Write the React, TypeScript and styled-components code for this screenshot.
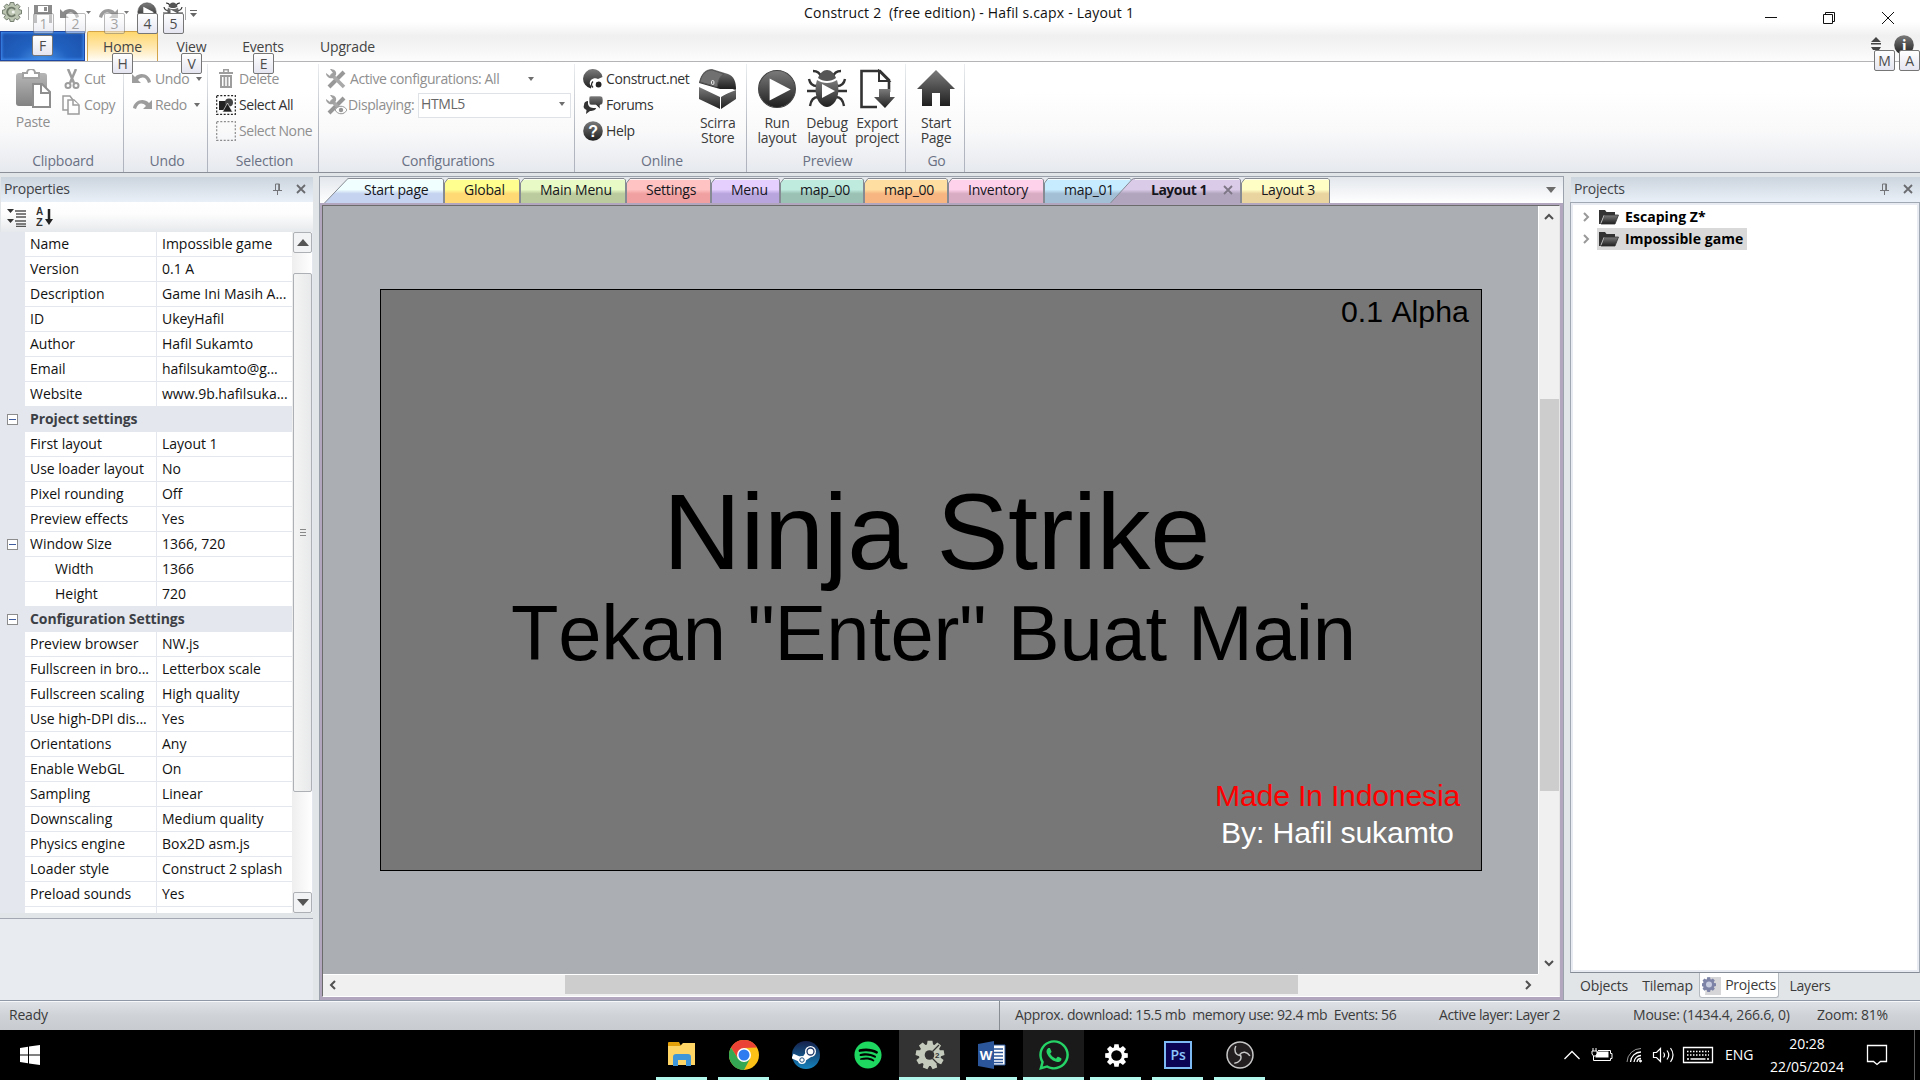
import React from "react";
import styled, { createGlobalStyle, css } from "styled-components";
import { FaWhatsapp, FaSpotify } from "react-icons/fa";

const ui = `"Open Sans", "Noto Sans", sans-serif`;

const Global = createGlobalStyle`
  * { box-sizing: border-box; }
  body { margin: 0; background: #e1e5e8; overflow: hidden; }
`;

const Window = styled.div`
  position: relative;
  width: 1920px;
  height: 1080px;
  display: flex;
  flex-direction: column;
  font: 14px/20px ${ui};
  letter-spacing: -0.2px;
  color: #3b3b3b;
  white-space: pre;
  overflow: hidden;
  background: #e1e5e8;
`;

/* ---------- Title bar and ribbon ---------- */

const Header = styled.header`
  height: 62px;
  display: flex;
  flex-direction: column;
  background: linear-gradient(#fff 0, #fff 22px, #f0f0f0 36px, #f2f2f2 42px, #fcfcfc 60px);
  border-bottom: 1px solid #b4b4b6;
`;

const TitleRow = styled.div`
  height: 31px;
  display: grid;
  grid-template-columns: 804px 1fr 190px;
`;

const QuickAccess = styled.div`
  display: flex;
  padding-top: 2px;
  padding-left: 2px;
  align-items: flex-start;
  & > svg { flex: none; }
`;

const Drop = styled.span`
  padding-top: 5px;
  height: 20px;
  line-height: 0;
`;

const Title = styled.div`
  padding-top: 3px;
  color: #111;
  letter-spacing: 0.2px;
`;

const WindowButtons = styled.div`
  display: flex;
  padding: 11px 0 0 34px;
  gap: 45px;
  height: 30px;
`;

const TabRow = styled.nav`
  height: 31px;
  display: flex;
  align-items: stretch;
`;

const FileButton = styled.div`
  width: 85px;
  margin-right: 2px;
  border: 1px solid #1d47a3;
  box-shadow: inset 0 0 3px 1px #3f8cf0;
  background: radial-gradient(ellipse at 50% 110%, #4a97ea 0, #2161c0 45%, #1c50ab 100%);
`;

const RibbonTab = styled.div<{ $w: number; $active?: boolean }>`
  width: ${(p) => p.$w}px;
  display: flex;
  justify-content: center;
  padding-top: 6px;
  color: #444;
  ${(p) =>
    p.$active &&
    css`
      border: 1px solid #d3a448;
      border-bottom: 0;
      border-radius: 2px 2px 0 0;
      padding-top: 5px;
      background: linear-gradient(#ffd76d, #ffe9b3 55%, #fffdf8);
    `}
`;

const HeaderTools = styled.div`
  margin-left: auto;
  display: flex;
  gap: 12px;
  padding: 4px 6px 0 0;
`;

const Ribbon = styled.section`
  height: 111px;
  display: flex;
  background: linear-gradient(#fff 0, #fff 30px, #f9f9fa 70px, #e6e9ee 110px);
  border-bottom: 1px solid #8a8f98;
`;

const Group = styled.div<{ $w: number }>`
  width: ${(p) => p.$w}px;
  display: flex;
  flex-direction: column;
  margin-top: 2px;
  border-right: 1px solid;
  border-image: linear-gradient(#eceef0, #b3b8c1 60%, #aeb3bd) 1;
`;

const GroupBody = styled.div<{ $pad: number; $gap?: number }>`
  height: 86px;
  display: flex;
  gap: ${(p) => p.$gap ?? 0}px;
  padding-left: ${(p) => p.$pad}px;
`;

const GroupName = styled.div`
  padding: 1px 0 0 3px;
  text-align: center;
  color: #6a7184;
`;

const Column = styled.div`
  display: flex;
  flex-direction: column;
  padding-top: 2px;
`;

const Command = styled.div<{ $off?: boolean; $gap?: number }>`
  height: 26px;
  display: flex;
  align-items: center;
  gap: ${(p) => p.$gap ?? 3}px;
  letter-spacing: -0.4px;
  color: ${(p) => (p.$off ? "#8f8f8f" : "#333")};
  & > svg { flex: none; opacity: ${(p) => (p.$off ? 0.5 : 1)}; }
`;

const ComboLabel = styled.span`
  width: 69px;
`;

const BigCommand = styled.div<{ $w: number; $off?: boolean }>`
  width: ${(p) => p.$w}px;
  display: flex;
  flex-direction: column;
  align-items: center;
  padding-top: 5px;
  gap: 6px;
  text-align: center;
  line-height: 15px;
  letter-spacing: -0.25px;
  color: ${(p) => (p.$off ? "#8f8f8f" : "#3b3b3b")};
  & > svg { flex: none; opacity: ${(p) => (p.$off ? 0.55 : 1)}; }
`;

const Combo = styled.div`
  width: 153px;
  height: 25px;
  border: 1px solid #dfe3e8;
  background: #fff;
  display: flex;
  align-items: center;
  justify-content: space-between;
  padding: 0 5px 2px 2px;
  color: #666;
`;

const Arrow = styled.i<{ $c?: string; $s?: number }>`
  flex: none;
  width: 0;
  height: 0;
  border: ${(p) => p.$s ?? 3}px solid transparent;
  border-bottom: 0;
  border-top: ${(p) => (p.$s ?? 3) + 1}px solid ${(p) => p.$c ?? "#6e6e6e"};
`;

const KeyTip = styled.kbd<{ $x: number; $y: number; $off?: boolean }>`
  position: absolute;
  left: ${(p) => p.$x}px;
  top: ${(p) => p.$y}px;
  width: 21px;
  height: 21px;
  border: 1px solid #767676;
  border-radius: 2px;
  background: linear-gradient(#fff, #e4e5f0);
  font: 14px/19px ${ui};
  text-align: center;
  color: #4c4c4c;
  opacity: ${(p) => (p.$off ? 0.5 : 1)};
`;

/* ---------- Work area ---------- */

const Main = styled.main`
  height: 827px;
  display: grid;
  grid-template-columns: 313px 6px 1245px 6px 350px;
`;

const Side = styled.aside`
  display: flex;
  flex-direction: column;
  min-width: 0;
`;

const PanelHead = styled.div`
  margin: 4px 0 0 1px;
  height: 25px;
  display: flex;
  align-items: center;
  padding: 0 7px 1px 3px;
  background: linear-gradient(#ccd4dd, #e9f0f8);
  color: #3f4247;
  & > svg:first-of-type { margin-left: auto; margin-right: 14px; }
`;

const PropTools = styled.div`
  height: 30px;
  margin-left: 1px;
  display: flex;
  align-items: center;
  padding: 0 0 0 6px;
  gap: 10px;
  background: linear-gradient(#fff, #fdfdfd 40%, #e6e9ec);
`;

const PropArea = styled.div`
  height: 681px;
  display: grid;
  grid-template-columns: 292px 20px;
  background: #e4e7ed;
`;

const PropList = styled.div`
  overflow: hidden;
  height: 681px;
`;

const PropRow = styled.div<{ $head?: boolean }>`
  height: 25px;
  display: grid;
  grid-template-columns: 25px 131px 136px;
  letter-spacing: -0.02px;
  color: #111;
  ${(p) => p.$head && css`font-weight: 700; letter-spacing: -0.1px; color: #3c3f45; grid-template-columns: 25px 267px;`}
`;

const Gutter = styled.div`
  display: flex;
  align-items: center;
  justify-content: center;
`;

const Cell = styled.div<{ $indent?: boolean; $plain?: boolean; $val?: boolean }>`
  overflow: hidden;
  padding-left: ${(p) => (p.$indent ? 30 : 5)}px;
  line-height: 23px;
  ${(p) => !p.$plain && css`background: #fff; border-bottom: 1px solid #e4e7ed;`}
  ${(p) => p.$val && css`border-left: 1px solid #e4e7ed;`}
`;

const Toggle = styled.span`
  width: 11px;
  height: 11px;
  border: 1px solid #8c8c8c;
  background: #fff;
  display: flex;
  align-items: center;
  justify-content: center;
  &::after { content: ""; width: 7px; height: 1px; background: #3f5c9f; }
`;

const PropScroll = styled.div`
  display: flex;
  flex-direction: column;
  padding: 0 1px;
  background: linear-gradient(90deg, #eeeeef, #fff);
`;

const ScrollKey = styled.div`
  width: 19px;
  height: 21px;
  border: 1px solid #adb0b4;
  border-radius: 2px;
  background: #f2f3f4;
  display: flex;
  align-items: center;
  justify-content: center;
`;

const ScrollThumb = styled.div`
  width: 19px;
  margin: 20px 0 auto;
  height: 519px;
  border: 1px solid #adb0b4;
  border-radius: 2px;
  background: linear-gradient(90deg, #f4f4f4, #e8e9ea);
  display: flex;
  align-items: center;
  justify-content: center;
`;

const PropHelp = styled.div`
  margin-top: 5px;
  flex: 1;
  border-top: 1px solid #a2a7b1;
  background: #e8ecf1;
`;

/* ---------- Document area ---------- */

const Doc = styled.section`
  margin-top: 3px;
  border: 1px solid #9ba2ac;
  border-bottom: 0;
  display: flex;
  flex-direction: column;
  background: #b1a6bd;
`;

const TabStrip = styled.div`
  height: 26px;
  display: flex;
  padding: 1px 6px 0 4px;
  background: linear-gradient(#e3e7ec, #fff);
  color: #222;
`;

const DocTab = styled.div<{ $w: number; $bold?: boolean; $lead: number }>`
  position: relative;
  flex: none;
  width: ${(p) => p.$w}px;
  margin-left: ${(p) => (p.$bold ? -22 : 0)}px;
  height: 25px;
  padding: 0 0 1px ${(p) => p.$lead}px;
  display: flex;
  align-items: center;
  gap: 16px;
  font-weight: ${(p) => (p.$bold ? 700 : 400)};
  letter-spacing: ${(p) => (p.$bold ? -0.5 : -0.22)}px;
  color: #15151c;
  z-index: ${(p) => (p.$bold ? 2 : 1)};
  & > svg { position: absolute; inset: 0; z-index: 0; }
  & > span { position: relative; }
`;

const TabListButton = styled.div`
  margin-left: auto;
  line-height: 0;
`;

const Viewport = styled.div`
  margin: 2px 3px 2px 2px;
  height: 792px;
  border: 1px solid #6b6b6b;
  border-right-color: #e6e6e6;
  border-bottom: 1px solid #fff;
  display: grid;
  grid-template-columns: 1215px 1fr;
  grid-template-rows: 768px 22px;
  background: #f0f0f0;
`;

const Stage = styled.div`
  position: relative;
  background: #abaeb3;
`;

const LayoutSheet = styled.div`
  position: absolute;
  left: 57px;
  top: 83px;
  width: 1102px;
  height: 582px;
  border: 1px solid #000;
  background: #777;
`;

const StageText = styled.div<{ $x: number; $y: number; $s: number; $c?: string; $ls?: number }>`
  position: absolute;
  left: ${(p) => p.$x}px;
  top: ${(p) => p.$y}px;
  font: ${(p) => p.$s}px/1 "Liberation Sans", Arial, sans-serif;
  font-kerning: none;
  letter-spacing: ${(p) => p.$ls ?? 0}px;
  color: ${(p) => p.$c ?? "#000"};
`;

const VBar = styled.div`
  border-left: 1px solid #fff;
  display: flex;
  flex-direction: column;
  align-items: center;
  padding: 6px 0 6px 0;
`;

const VThumb = styled.div`
  width: 19px;
  height: 392px;
  margin: 177px 0 auto;
  background: #cdcdcd;
`;

const HBar = styled.div`
  border-top: 1px solid #fff;
  display: flex;
  align-items: center;
  padding: 0 5px 2px;
`;

const HThumb = styled.div`
  margin: 0 auto 0 227px;
  width: 733px;
  height: 19px;
  background: #cdcdcd;
`;

/* ---------- Projects ---------- */

const Tree = styled.div`
  margin-top: 0;
  height: 771px;
  border: 1px solid #a0a8b4;
  border-bottom-color: #868c95;
  padding: 2px;
  background: #e8ecf2;
  & > div { background: #fff; height: 100%; padding-top: 1px; }
`;

const TreeItem = styled.div`
  height: 22px;
  display: flex;
  align-items: center;
  padding-left: 8px;
  gap: 6px;
`;

const TreeLabel = styled.div<{ $sel?: boolean }>`
  height: 22px;
  display: flex;
  align-items: center;
  gap: 6px;
  padding: 0 4px 0 2px;
  font-weight: 700;
  color: #000;
  letter-spacing: 0.05px;
  background: ${(p) => (p.$sel ? "#d9d9d9" : "transparent")};
`;

const BottomTabs = styled.div`
  height: 26px;
  display: flex;
  padding-left: 2px;
`;

const BottomTab = styled.div<{ $w: number; $active?: boolean }>`
  width: ${(p) => p.$w}px;
  height: 25px;
  display: flex;
  align-items: center;
  justify-content: center;
  gap: 4px;
  ${(p) => p.$active && css`
    background: #fff;
    border: 1px solid #b5b9c0;
    border-top: 0;
    border-radius: 0 0 3px 3px;
  `}
`;

/* ---------- Status and task bar ---------- */

const Status = styled.footer`
  height: 30px;
  border-top: 1px solid #9099a8;
  box-shadow: inset 0 1px #f6f8fa;
  background: linear-gradient(#dfe3e7, #cfd3d8 50%, #c8cbcf);
  display: grid;
  grid-template-columns: 1000px 439px 194px 184px 1fr;
  line-height: 28px;
`;

const StatusCell = styled.div<{ $pad?: number; $line?: boolean; $ls?: number }>`
  padding-left: ${(p) => p.$pad ?? 0}px;
  letter-spacing: ${(p) => p.$ls ?? -0.2}px;
  ${(p) => p.$line && css`border-right: 1px solid #888d93;`}
`;

const Taskbar = styled.div`
  height: 50px;
  background: #000;
  display: flex;
  color: #fff;
`;

const StartButton = styled.div`
  width: 651px;
  padding: 15px 0 0 20px;
`;

const Task = styled.div<{ $bg?: string; $run?: boolean }>`
  width: 62px;
  height: 50px;
  display: flex;
  justify-content: center;
  align-items: center;
  position: relative;
  background: ${(p) => p.$bg ?? "transparent"};
  box-shadow: inset -1px 0 #000;
  &::after {
    content: "";
    position: absolute;
    bottom: 0;
    left: ${(p) => (p.$bg ? 0 : 5)}px;
    width: ${(p) => (p.$bg ? 61 : 51)}px;
    height: 3px;
    background: ${(p) => (p.$run ? "#b2f7ec" : "transparent")};
  }
`;

const Tray = styled.div`
  margin-left: auto;
  display: flex;
  align-items: center;
  width: 358px;
  & > svg { flex: none; }
`;

const Lang = styled.div`
  width: 34px;
  margin-left: 11px;
  letter-spacing: 0;
`;

const Clock = styled.div`
  width: 80px;
  margin-left: 8px;
  margin-right: 19px;
  text-align: center;
  line-height: 23px;
  letter-spacing: -0.05px;
`;

const ShowDesktop = styled.div`
  margin-left: auto;
  width: 6px;
  height: 50px;
  border-left: 1px solid #5c5c5c;
`;

/* ---------- Icons ---------- */

const D = "#3e3e3e";

const gear = (n: number, ro: number, ri: number, c: number) => {
  const pts: string[] = [];
  for (let i = 0; i < n; i++) {
    const a = (i / n) * Math.PI * 2;
    const s = Math.PI / n;
    [[-0.8, ri], [-0.48, ro], [0.48, ro], [0.8, ri]].forEach(([k, r]) => {
      pts.push(`${(c + Math.sin(a + k * s) * r).toFixed(2)},${(c - Math.cos(a + k * s) * r).toFixed(2)}`);
    });
  }
  return `M${pts.join("L")}Z`;
};

const C2Logo = ({ s = 22 }: { s?: number }) => (
  <svg width={s} height={s} viewBox="0 0 32 32">
    <path d={gear(8, 15.5, 12, 16)} fill="#bcc4b2" stroke="#5d6757" strokeWidth="1.3" />
    <path d="M21 12a7 7 0 1 0 0 8" fill="none" stroke="#707a69" strokeWidth="3" />
    <circle cx="18" cy="16" r="2.5" fill="#eef2ea" />
  </svg>
);

const Save = () => (
  <svg width="18" height="21" viewBox="0 -2 18 21"><path fill="#8b8b8b" d="M0 1h18v18H0z" /><path fill="#fff" d="M4 2h10v6H4zM3 11h12v8H3z" /><path fill="#8b8b8b" d="M10 3h3v4h-3z" /></svg>
);

const Swoosh = ({ flip, c = "#3e3e3e" }: { flip?: boolean; c?: string }) => (
  <svg width="20" height="14" viewBox="0 0 20 14">
    <path transform={flip ? "translate(20 0) scale(-1 1)" : undefined} fill={c} d="M0 2v9h9L6 8c4-4 8-3 10 3l3-1C18 3 9-1 3 5z" />
  </svg>
);

const Grad = () => (
  <svg width="0" height="0" style={{ position: "absolute" }}>
    <defs>
      <linearGradient id="dk" x1="0" y1="0" x2="0" y2="1"><stop offset="0" stopColor="#7b7b7b" /><stop offset="1" stopColor="#1f1f1f" /></linearGradient>
      <linearGradient id="st" x1="0" y1="0" x2="0" y2="1"><stop offset="0" stopColor="#16204a" /><stop offset="1" stopColor="#1583bd" /></linearGradient>
    </defs>
  </svg>
);

const Play = ({ s = 38 }: { s?: number }) => (
  <svg width={s} height={s} viewBox="0 0 38 38"><circle cx="19" cy="19" r="17.500" fill="url(#dk)" stroke="#444" /><path d="M12 9v21l20-10.500z" fill="#fff" /></svg>
);

const Bug = ({ s = 40 }: { s?: number }) => (
  <svg width={s} height={s} viewBox="0 0 40 40">
    <g fill="none" stroke="#333" strokeWidth="2.400">
      <path d="M14 8C13 4 10 2 6 2M26 8c1-4 4-6 8-6M10 17C6 17 3 15 2 10M30 17c4 0 7-2 8-7M9 22H0M31 22h9M11 28c-5 0-7 3-8 9M29 28c5 0 7 3 8 9" />
    </g>
    <path d="M11 9c5 4 13 4 18 0-2-5-5-8-9-8s-7 3-9 8z" fill="#555" />
    <path d="M10 11c6 4 14 4 20 0 4 14-1 26-10 27C11 37 6 25 10 11z" fill="url(#dk)" />
    <path d="M15 15v14l13-7z" fill="#fff" />
  </svg>
);

const ExportIcon = () => (
  <svg width="36" height="40" viewBox="0 0 36 40">
    <path d="M18 38H2.500V2H21l9 9v12" fill="#fff" stroke="#333" strokeWidth="2.600" />
    <path d="M20 2v10h10z" fill="#fff" stroke="#333" strokeWidth="2" />
    <path d="M20 20h11v8h5L26 39 15 28h5z" fill="url(#dk)" />
  </svg>
);

const HomeIcon = () => (
  <svg width="40" height="40" viewBox="0 0 40 40"><path d="M20 1L1 20h5v17h10V24h8v13h10V20h5z" fill="url(#dk)" /></svg>
);

const Chest = () => (
  <svg width="40" height="40" viewBox="0 0 40 40">
    <path d="M1 18l21 10v12L1 30zM38 19v11L23 40V28z" fill="url(#dk)" />
    <path d="M1 14C3 4 8 0 14 0l16 5c6 2 8 8 8 15l-16 0z" fill="url(#dk)" />
    <path d="M2 16l20 5h16l-15 6z" fill="#fff" />
    <path d="M2 13C4 4 9 1 14 1l12 4c-4 2-6 7-7 13z" fill="#707070" stroke="#555" />
    <rect x="13.500" y="11.500" width="2.400" height="4" rx="1.200" fill="none" stroke="#eee" />
  </svg>
);

const Paste = () => (
  <svg width="36" height="39" viewBox="0 0 36 39">
    <rect x="1" y="4" width="31" height="33" rx="3" fill="url(#dk)" />
    <path d="M8 4h4a4 4 0 0 1 8 0h4v5H8z" fill="#fff" stroke="#555" strokeWidth="2" />
    <path d="M18 15h9l8 8v15H18z" fill="#fff" stroke="#333" strokeWidth="2" />
    <path d="M26 15v9h9" fill="none" stroke="#333" strokeWidth="2" />
  </svg>
);

const Cut = () => (
  <svg width="16" height="20" viewBox="0 0 16 20" fill="none" stroke={D} strokeWidth="2">
    <path d="M4 0l6 14M12 0L6 14" strokeWidth="2.500" /><circle cx="4" cy="16.500" r="2.500" /><circle cx="12" cy="16.500" r="2.500" />
  </svg>
);

const Copy = () => (
  <svg width="18" height="20" viewBox="0 0 18 20" fill="#fff" stroke={D} strokeWidth="1.500">
    <path d="M1 1h7l3 4v10H1z" /><path d="M6 5h6l5 5v9H6z" /><path d="M11 5v5h6" />
  </svg>
);

const Trash = () => (
  <svg width="20" height="20" viewBox="0 0 20 20" fill={D}><path d="M3 3h14v2H3zM7 0h6v3h-1.500V1.500h-3V3H7z" /><path d="M4 6h12v13H4zm2 2v9h1.500V8zm3.200 0v9h1.600V8zm3.300 0v9H14V8z" fillRule="evenodd" /></svg>
);

const SelAll = ({ empty }: { empty?: boolean }) => (
  <svg width="20" height="20" viewBox="0 0 20 20">
    <rect x=".7" y=".7" width="18.600" height="18.600" fill="none" stroke="#222" strokeWidth="1.200" strokeDasharray="2 1.600" />
    {!empty && <><path d="M3 6h8v9H3z" fill="#222" /><circle cx="13" cy="7.500" r="4" fill="#444" /><path d="M11.500 8l5 9h-10z" fill="#222" stroke="#fff" strokeWidth=".6" /></>}
  </svg>
);

const Tools = ({ eye }: { eye?: boolean }) => (
  <svg width="21" height="20" viewBox="0 0 21 20">
    <path d="M3 18L18 3" stroke="#333" strokeWidth="4" /><path d="M5 5l13 13" stroke="#555" strokeWidth="3.500" />
    <path d="M4 0l3 4-3 3-4-3c0 4 4 6 7 5l3-3c1-4-2-6-6-6z" fill="#444" />
    {eye && <><path d="M9 15c3-5 9-5 12 0-3 5-9 5-12 0z" fill="#fff" stroke="#333" /><circle cx="15" cy="15" r="2.200" fill="#333" /></>}
  </svg>
);

const NetIcon = () => (
  <svg width="20" height="20" viewBox="0 0 20 20">
    <path d="M19.500 8A9.800 9.800 0 1 0 8 19.500l.5-2.500c-2-1-2.500-4-.5-6s5-2.500 7-1z" fill="url(#dk)" />
    <circle cx="15.500" cy="15.500" r="3" fill="#222" />
    <path d="M9.500 13.500l4-2.500 2 1-2.500 1.500-1 4-3 2z" fill="#fff" />
    <path d="M10 12.500q-3 3 0 6" stroke="#222" fill="none" strokeWidth="1.200" />
  </svg>
);

const Forum = () => (
  <svg width="20" height="20" viewBox="0 0 20 20">
    <path d="M1 10c0-3 2-4 4-4v3c1 4 4 4 8 4 0 2-3 3-6 3l-4 3 .5-4C1 14 0 12 1 10z" fill="#333" />
    <path d="M8 1h9c3 0 3 3 3 5s-1 4-3 4l0 4-4-4H9C6 10 6 8 6 5s0-4 2-4z" fill="url(#dk)" stroke="#fff" strokeWidth=".6" />
  </svg>
);

const Badge = ({ t, s = 20 }: { t: string; s?: number }) => (
  <svg width={s} height={s} viewBox="0 0 20 20"><circle cx="10" cy="10" r="9.800" fill="url(#dk)" /><text x="10" y="15.500" textAnchor="middle" fontFamily={t === "i" ? "Liberation Serif" : "Liberation Sans"} fontWeight="700" fontSize="16" fill="#fff">{t}</text></svg>
);

const Pin = () => (
  <svg width="9" height="12" viewBox="0 0 9 12" fill="none" stroke="#737578"><path d="M2.500 7V1h4v6M5.700 1v6M0 7.500h9M4.500 7.500V12" /></svg>
);

const Cross = ({ c = "#696b6e", s = 10 }: { c?: string; s?: number }) => (
  <svg width={s} height={s} viewBox="0 0 10 10"><path d="M1 1l8 8M9 1L1 9" stroke={c} strokeWidth="1.800" /></svg>
);

const Chev = ({ r = 0, c = "#505050" }: { r?: number; c?: string }) => (
  <svg width="10" height="10" viewBox="0 0 10 10"><path transform={`rotate(${r} 5 5)`} d="M1 7l4-4 4 4" stroke={c} strokeWidth="2" fill="none" /></svg>
);

const Folder = () => (
  <svg width="20" height="16" viewBox="0 0 20 16">
    <path d="M0 1h6l1.500 2H16v3H5L1.500 15H0z" fill="#333" />
    <path d="M5.500 6H19.500l-3.500 9H2z" fill="url(#dk)" stroke="#333" strokeWidth=".8" />
    <path d="M5 6.500L2 14" stroke="#ccc" strokeWidth=".8" />
  </svg>
);

const tabs: { t: string; w: number; top: string; bot: string; lead?: number; kind?: "slant" | "active" }[] = [
  { t: "Start page", w: 120, top: "#f0ffff", bot: "#c5d3f0", lead: 40, kind: "slant" },
  { t: "Global", w: 76, top: "#ffff90", bot: "#ffd974" },
  { t: "Main Menu", w: 106, top: "#e8fbc6", bot: "#bccb9d" },
  { t: "Settings", w: 85, top: "#ffc3c3", bot: "#f0a0a0" },
  { t: "Menu", w: 69, top: "#e5cfff", bot: "#b9a5de" },
  { t: "map_00", w: 84, top: "#bfebde", bot: "#9ac1b4" },
  { t: "map_00", w: 84, top: "#ffdea2", bot: "#f7b681" },
  { t: "Inventory", w: 96, top: "#ffd2ec", bot: "#d8acc2" },
  { t: "map_01", w: 88, top: "#c8ecff", bot: "#a2bfd6" },
  { t: "Layout 1", w: 131, top: "#dacbe8", bot: "#b1a4bd", lead: 41, kind: "active" },
  { t: "Layout 3", w: 89, top: "#ffffc5", bot: "#e9d49f" },
];

const TabView = ({ tab, i }: { tab: (typeof tabs)[number]; i: number }) => {
  const { w } = tab;
  const d = tab.kind ? `M.5 25L${w > 125 ? 22 : 23} 1.500Q23 .5 25 .5H${w - 2}L${w - .5} 2V25` : `M.5 25V5L4 .5H${w - 2}L${w - .5} 2V25`;
  return (
    <DocTab $w={w} $bold={tab.kind === "active"} $lead={tab.lead ?? 20}>
      <svg width={w} height="25">
        <defs>
          <linearGradient id={`t${i}`} x1="0" y1="0" x2="0" y2="1">
            <stop offset="0" stopColor={tab.top} /><stop offset=".45" stopColor={tab.top} />
            <stop offset=".62" stopColor={tab.bot} /><stop offset="1" stopColor={tab.bot} />
          </linearGradient>
        </defs>
        <path d={d} fill={`url(#t${i})`} stroke="#868b93" />
        <path d={`M${tab.kind ? 25 : 4} 1.500H${w - 2}`} stroke="#fff" opacity=".8" />
      </svg>
      <span>{tab.t}</span>
      {tab.kind === "active" && <span><Cross c="#7d7786" /></span>}
    </DocTab>
  );
};

type Row = { n: string; v?: string; head?: boolean; indent?: boolean; toggle?: boolean };
const rows: Row[] = [
  { n: "Name", v: "Impossible game" },
  { n: "Version", v: "0.1 A" },
  { n: "Description", v: "Game Ini Masih A..." },
  { n: "ID", v: "UkeyHafil" },
  { n: "Author", v: "Hafil Sukamto" },
  { n: "Email", v: "hafilsukamto@g..." },
  { n: "Website", v: "www.9b.hafilsuka..." },
  { n: "Project settings", head: true, toggle: true },
  { n: "First layout", v: "Layout 1" },
  { n: "Use loader layout", v: "No" },
  { n: "Pixel rounding", v: "Off" },
  { n: "Preview effects", v: "Yes" },
  { n: "Window Size", v: "1366, 720", toggle: true },
  { n: "Width", v: "1366", indent: true },
  { n: "Height", v: "720", indent: true },
  { n: "Configuration Settings", head: true, toggle: true },
  { n: "Preview browser", v: "NW.js" },
  { n: "Fullscreen in bro...", v: "Letterbox scale" },
  { n: "Fullscreen scaling", v: "High quality" },
  { n: "Use high-DPI dis...", v: "Yes" },
  { n: "Orientations", v: "Any" },
  { n: "Enable WebGL", v: "On" },
  { n: "Sampling", v: "Linear" },
  { n: "Downscaling", v: "Medium quality" },
  { n: "Physics engine", v: "Box2D asm.js" },
  { n: "Loader style", v: "Construct 2 splash" },
  { n: "Preload sounds", v: "Yes" },
  { n: "", v: "" },
];

const tips: [string, number, number, boolean?][] = [
  ["1", 33, 13, true], ["2", 65, 13, true], ["3", 104, 13, true], ["4", 137, 13], ["5", 163, 13],
  ["F", 32, 35], ["H", 112, 53], ["V", 181, 53], ["E", 253, 53], ["M", 1874, 50], ["A", 1899, 50],
];

const Explorer = () => (
  <svg width="28" height="26" viewBox="0 0 28 26"><path d="M0 1q0-1 1-1h10l2 4H0z" fill="#e3a008" /><path d="M0 4h12l3-3h12v22H0z" fill="#ffd666" /><path d="M5 24v-9q0-3 3-3h12q3 0 3 3v9h-5v-6h-8v6z" fill="#3f97d9" /></svg>
);
const Chrome = () => (
  <svg width="30" height="30" viewBox="0 0 30 30">
    <circle cx="15" cy="15" r="15" fill="#fbc116" />
    <path d="M15 8L28 7.500A15 15 0 0 0 2 7.500L8.900 18.500z" fill="#ea4335" />
    <path d="M2 7.500A15 15 0 0 0 15 30l6.100-11.500L15 22l-6.100-3.500z" fill="#34a853" />
    <circle cx="15" cy="15" r="7" fill="#fff" /><circle cx="15" cy="15" r="5.500" fill="#2e7cf0" />
  </svg>
);
const Steam = () => (
  <svg width="28" height="28" viewBox="0 0 28 28"><circle cx="14" cy="14" r="14" fill="url(#st)" /><path d="M.5 15l9 4" stroke="#fff" strokeWidth="5" /><circle cx="10" cy="19" r="4" fill="#fff" /><path d="M10 17l4-6 5 5-6 4z" fill="#fff" /><circle cx="18.500" cy="10.500" r="5.500" fill="#fff" /><circle cx="18.500" cy="10.500" r="3.500" fill="#fff" stroke="#1c3768" strokeWidth="1.300" /><circle cx="10" cy="19" r="2.200" fill="#fff" stroke="#1a4f82" /></svg>
);
const C2Task = () => (
  <svg width="30" height="30" viewBox="0 0 30 30">
    <path d={gear(9, 14.5, 11, 15)} fill="#c5cbbc" />
    <circle cx="14.500" cy="15" r="4.800" fill="#333" />
    <path d="M17.500 11.500L24 5M17.500 18.500L24 25" stroke="#333" strokeWidth="1.300" />
    <text x="22" y="18" fontSize="8" fontWeight="700" textAnchor="middle" fill="#333" fontFamily="Liberation Sans">2</text>
  </svg>
);
const Word = () => (
  <svg width="28" height="28" viewBox="0 0 28 28"><path d="M14 4h13v20H14z" fill="#fff" stroke="#2b579a" /><path d="M16 8h9M16 11.500h9M16 15h9M16 18.500h9M16 21.500h9" stroke="#2b579a" strokeWidth="1.500" /><path d="M0 3L16 0v28L0 25z" fill="#2b579a" /><text x="8" y="18.500" fontSize="13" fontWeight="700" textAnchor="middle" fill="#fff" fontFamily="Open Sans">W</text></svg>
);
const Settings = () => (
  <svg width="23" height="23" viewBox="0 0 24 24"><path d={gear(8, 12, 8.8, 12)} fill="#fff" /><circle cx="12" cy="12" r="5.500" fill="#000" /></svg>
);
const Ps = () => (
  <svg width="28" height="28" viewBox="0 0 28 28"><rect x="1" y="1" width="26" height="26" fill="#0b0353" stroke="#7db9f2" strokeWidth="2" /><text x="14" y="19" fontSize="14" fontWeight="600" textAnchor="middle" fill="#8cc4fb" fontFamily="Open Sans">Ps</text></svg>
);
const Obs = () => (
  <svg width="28" height="28" viewBox="0 0 28 28" fill="none" stroke="#c8c8c8"><circle cx="14" cy="14" r="13" fill="#231f20" strokeWidth="1.500" />
    {[0, 120, 240].map((a) => <path key={a} transform={`rotate(${a} 14 14)`} d="M14 14.500C9.500 14 7.500 9.500 9.800 5" strokeWidth="1.500" />)}
  </svg>
);

export default function App() {
  return (
    <Window>
      <Global />
      <Grad />
      <Header>
        <TitleRow>
          <QuickAccess>
            <C2Logo s={20} />
            <svg width="10" height="22"><path d="M6.500 5v13" stroke="#aaa" /></svg>
            <svg width="2" height="1" />
            <Save />
            <svg width="8" height="1" />
            <Drop><Swoosh c="#8b8b8b" /></Drop>
            <svg width="18" height="22" viewBox="0 0 18 22"><path d="M6 9h5l-2.500 3z" fill="#777" /></svg>
            <Drop><Swoosh flip c="#9b9b9b" /></Drop>
            <svg width="19" height="22" viewBox="0 0 19 22"><path d="M6 9h5l-2.500 3z" fill="#777" /></svg>
            <Play s={20} />
            <svg width="6" height="1" />
            <Bug s={20} />
            <svg width="16" height="22" viewBox="0 0 16 22"><path d="M2.500 5v13" stroke="#aaa" /><path d="M7 8.500h7" stroke="#666" /><path d="M7 11h7l-3.500 4z" fill="#666" /></svg>
          </QuickAccess>
          <Title>Construct 2  (free edition) - Hafil s.capx - Layout 1</Title>
          <WindowButtons>
            <svg width="14" height="14"><path d="M1 6.500h12" stroke="#111" /></svg>
            <svg width="14" height="14" fill="none" stroke="#111"><path d="M.5 3.500h9v9h-9zM2.500 3.500v-2h9v9h-2" /></svg>
            <svg width="14" height="14" stroke="#111"><path d="M0 1l12 12M12 1L0 13" /></svg>
          </WindowButtons>
        </TitleRow>
        <TabRow>
          <FileButton />
          <RibbonTab $w={71} $active>Home</RibbonTab>
          <RibbonTab $w={67}>View</RibbonTab>
          <RibbonTab $w={76}>Events</RibbonTab>
          <RibbonTab $w={93}>Upgrade</RibbonTab>
          <HeaderTools>
            <svg width="12" height="17" viewBox="0 0 12 17" fill="#444"><path d="M1 7h10L6 2zM1 8h10v1.500H1zM1 12h10l-2 3H3z" /></svg>
            <Badge t="i" />
          </HeaderTools>
        </TabRow>
      </Header>

      <Ribbon>
        <Group $w={124}>
          <GroupBody $pad={10}>
            <BigCommand $w={46} $off><Paste /><span>Paste</span></BigCommand>
            <Column>
              <Command $off $gap={4}><svg width="4" height="1" /><Cut />Cut</Command>
              <Command $off $gap={4}><svg width="2" height="1" /><Copy />Copy</Command>
            </Column>
          </GroupBody>
          <GroupName>Clipboard</GroupName>
        </Group>
        <Group $w={84}>
          <GroupBody $pad={8}>
            <Column>
              <Command $off><Swoosh />Undo<svg width="1" height="1" /><Arrow /></Command>
              <Command $off><Swoosh flip />Redo<svg width="1" height="1" /><Arrow /></Command>
            </Column>
          </GroupBody>
          <GroupName>Undo</GroupName>
        </Group>
        <Group $w={111}>
          <GroupBody $pad={8}>
            <Column>
              <Command $off><Trash />Delete</Command>
              <Command><SelAll />Select All</Command>
              <Command $off><SelAll empty />Select None</Command>
            </Column>
          </GroupBody>
          <GroupName>Selection</GroupName>
        </Group>
        <Group $w={256}>
          <GroupBody $pad={7}>
            <Column>
              <Command $off><Tools />Active configurations: All<svg width="23" height="1" /><Arrow /></Command>
              <Command $off $gap={1}><Tools eye /><ComboLabel>Displaying:</ComboLabel><Combo>HTML5<Arrow /></Combo></Command>
            </Column>
          </GroupBody>
          <GroupName>Configurations</GroupName>
        </Group>
        <Group $w={172}>
          <GroupBody $pad={8}>
            <Column>
              <Command><NetIcon />Construct.net</Command>
              <Command><Forum />Forums</Command>
              <Command><Badge t="?" />Help</Command>
            </Column>
            <BigCommand $w={58}><Chest /><span>{"Scirra\nStore"}</span></BigCommand>
          </GroupBody>
          <GroupName>Online</GroupName>
        </Group>
        <Group $w={159}>
          <GroupBody $pad={5}>
            <BigCommand $w={50}><Play s={40} /><span>{"Run\nlayout"}</span></BigCommand>
            <BigCommand $w={50}><Bug /><span>{"Debug\nlayout"}</span></BigCommand>
            <BigCommand $w={50}><ExportIcon /><span>{"Export\nproject"}</span></BigCommand>
          </GroupBody>
          <GroupName>Preview</GroupName>
        </Group>
        <Group $w={59}>
          <GroupBody $pad={5}>
            <BigCommand $w={50}><HomeIcon /><span>{"Start\nPage"}</span></BigCommand>
          </GroupBody>
          <GroupName>Go</GroupName>
        </Group>
      </Ribbon>

      <Main>
        <Side>
          <PanelHead>Properties<Pin /><Cross /></PanelHead>
          <PropTools>
            <svg width="19" height="19" viewBox="0 0 19 19"><path d="M0 1h7L3.500 5zM0 11h7l-3.500 4z" fill="#333" /><path d="M8 3h11M9 6h10M9 9h10M8 13h11M9 16h10M9 18.500h10" stroke="#555" strokeWidth="1.300" /></svg>
            <svg width="18" height="20" viewBox="0 0 18 20"><text x="0" y="8" fontSize="10" fontWeight="700" fill="#333" fontFamily="Liberation Sans">A</text><text x="0" y="19" fontSize="11" fontWeight="700" fill="#333" fontFamily="Liberation Sans">Z</text><path d="M13 2v13" stroke="#222" strokeWidth="2.500" /><path d="M9 12h8l-4 6z" fill="#222" /></svg>
          </PropTools>
          <PropArea>
            <PropList>
              {rows.map((r, i) => (
                <PropRow key={i} $head={r.head}>
                  <Gutter>{r.toggle && <Toggle />}</Gutter>
                  <Cell $indent={r.indent} $plain={r.head}>{r.n}</Cell>
                  {!r.head && <Cell $val>{r.v}</Cell>}
                </PropRow>
              ))}
            </PropList>
            <PropScroll>
              <ScrollKey><svg width="12" height="7"><path d="M0 7h12L6 0z" fill="#555" /></svg></ScrollKey>
              <ScrollThumb><svg width="6" height="7"><path d="M0 .5h8M0 3.500h8M0 6.500h8" stroke="#888" /></svg></ScrollThumb>
              <ScrollKey><svg width="12" height="7"><path d="M0 0h12L6 7z" fill="#555" /></svg></ScrollKey>
            </PropScroll>
          </PropArea>
          <PropHelp />
        </Side>
        <div />
        <Doc>
          <TabStrip>
            {tabs.map((t, i) => <TabView key={i} tab={t} i={i} />)}
            <TabListButton><svg width="12" height="24" viewBox="0 0 12 24"><path d="M1 9h10l-5 6z" fill="#6c6c6c" /></svg></TabListButton>
          </TabStrip>
          <Viewport>
            <Stage>
              <LayoutSheet>
                <StageText $x={960} $y={7} $s={30.24}>0.1 Alpha</StageText>
                <StageText $x={282} $y={188} $s={108} $ls={-0.45}>Ninja Strike</StageText>
                <StageText $x={130} $y={305} $s={77.76} $ls={-0.25}>Tekan "Enter" Buat Main</StageText>
                <StageText $x={834} $y={491} $s={30.24} $c="#f00" $ls={-0.22}>Made In Indonesia</StageText>
                <StageText $x={840} $y={528} $s={30.24} $c="#fff" $ls={-0.15}>By: Hafil sukamto</StageText>
              </LayoutSheet>
            </Stage>
            <VBar><Chev /><VThumb /><Chev r={180} /></VBar>
            <HBar><Chev r={-90} /><HThumb /><Chev r={90} /></HBar>
            <div />
          </Viewport>
        </Doc>
        <div />
        <Side>
          <PanelHead>Projects<Pin /><Cross /></PanelHead>
          <Tree>
            <div>
              <TreeItem><Chev r={90} c="#999" /><TreeLabel><Folder />Escaping Z*</TreeLabel></TreeItem>
              <TreeItem><Chev r={90} c="#999" /><TreeLabel $sel><Folder />Impossible game</TreeLabel></TreeItem>
            </div>
          </Tree>
          <BottomTabs>
            <BottomTab $w={64}>Objects</BottomTab>
            <BottomTab $w={63}>Tilemap</BottomTab>
            <BottomTab $w={80} $active>
              <svg width="19" height="19" viewBox="0 0 19 19"><path d="M5 1h14v18H3z" fill="#d6d6d8" /><g transform="translate(-1 1) scale(.48)"><path d={gear(8, 15.5, 12, 16)} fill="#7c83a6" /></g><circle cx="7" cy="8.500" r="3" fill="#c7cbe0" /></svg>
              Projects
            </BottomTab>
            <BottomTab $w={62}>Layers</BottomTab>
          </BottomTabs>
        </Side>
      </Main>

      <Status>
        <StatusCell $pad={9} $line>Ready</StatusCell>
        <StatusCell $pad={15} $ls={-0.36}>Approx. download: 15.5 mb  memory use: 92.4 mb  Events: 56</StatusCell>
        <StatusCell $ls={-0.38}>Active layer: Layer 2</StatusCell>
        <StatusCell>Mouse: (1434.4, 266.6, 0)</StatusCell>
        <StatusCell>Zoom: 81%</StatusCell>
      </Status>

      <Taskbar>
        <StartButton>
          <svg width="20" height="20" viewBox="0 0 20 20" fill="#fff"><path d="M0 3l8-1.200V9.500H0zM9 1.600L20 0v9.500H9zM0 10.500h8v7.700L0 17zM9 10.500h11V20L9 18.400z" /></svg>
        </StartButton>
        <Task $run><Explorer /></Task>
        <Task $run><Chrome /></Task>
        <Task><Steam /></Task>
        <Task><FaSpotify size={28} color="#1ed760" /></Task>
        <Task $run $bg="#333"><C2Task /></Task>
        <Task $run><Word /></Task>
        <Task $run $bg="#1a1a1a"><FaWhatsapp size={34} color="#25d366" /></Task>
        <Task $run><Settings /></Task>
        <Task $run><Ps /></Task>
        <Task $run><Obs /></Task>
        <Tray>
          <svg width="20" height="12" viewBox="0 0 20 12"><path d="M2.500 10L10 2.500 17.500 10" fill="none" stroke="#fff" strokeWidth="1.300" /></svg>
          <svg width="31" height="16" viewBox="0 0 31 16"><path d="M13.500 4.500h13v6h-13z" fill="#fff" /><path d="M11.500 9v4.500h17v-2h1.500v-5h-1.500v-3H16" fill="none" stroke="#fff" /><path d="M11 1v3M14 1v3M10 4h5v3l-1.500 2h-2L10 7z" stroke="#fff" fill="#000" /></svg>
          <svg width="30" height="16" viewBox="0 0 30 16" fill="none" stroke="#fff"><path d="M14 15A14 14 0 0 1 28 1.500" opacity=".6" /><path d="M17.500 15A10.500 10.500 0 0 1 28 5" strokeWidth="1.300" /><path d="M21 15a7 7 0 0 1 7-6.500" strokeWidth="1.300" /><path d="M24 15a4 4 0 0 1 4-3.500" strokeWidth="1.300" /><circle cx="27.500" cy="14" r="1" fill="#fff" /></svg>
          <svg width="33" height="18" viewBox="1 0 33 18" fill="none" stroke="#fff" strokeWidth="1.200"><path d="M11.500 6.500h3l4-4v13l-4-4h-3zM21.500 6.500q2 2.500 0 5M25 4.500q3.500 4.500 0 9M28.500 2q5 7 0 14" /></svg>
          <svg width="38" height="18" viewBox="0 0 38 18"><path d="M7.500 1.500h29v15h-29z" fill="none" stroke="#fff" strokeWidth="1.300" /><path d="M11 5.500h22M11 9h22" stroke="#fff" strokeWidth="1.400" strokeDasharray="1.500 1.500" /><path d="M11 13h22" stroke="#fff" strokeWidth="1.400" strokeDasharray="2 1.500 15 1.500" /></svg>
          <Lang>ENG</Lang>
          <Clock>{"20:28\n22/05/2024"}</Clock>
          <svg width="22" height="22" viewBox="0 0 22 22"><path d="M1.500 1.500h19v16h-6l-3.500 3-3.500-3h-6z" fill="none" stroke="#fff" strokeWidth="1.300" /></svg>
          <ShowDesktop />
        </Tray>
      </Taskbar>

      {tips.map(([t, x, y, off]) => <KeyTip key={t} $x={x} $y={y} $off={off}>{t}</KeyTip>)}
    </Window>
  );
}
